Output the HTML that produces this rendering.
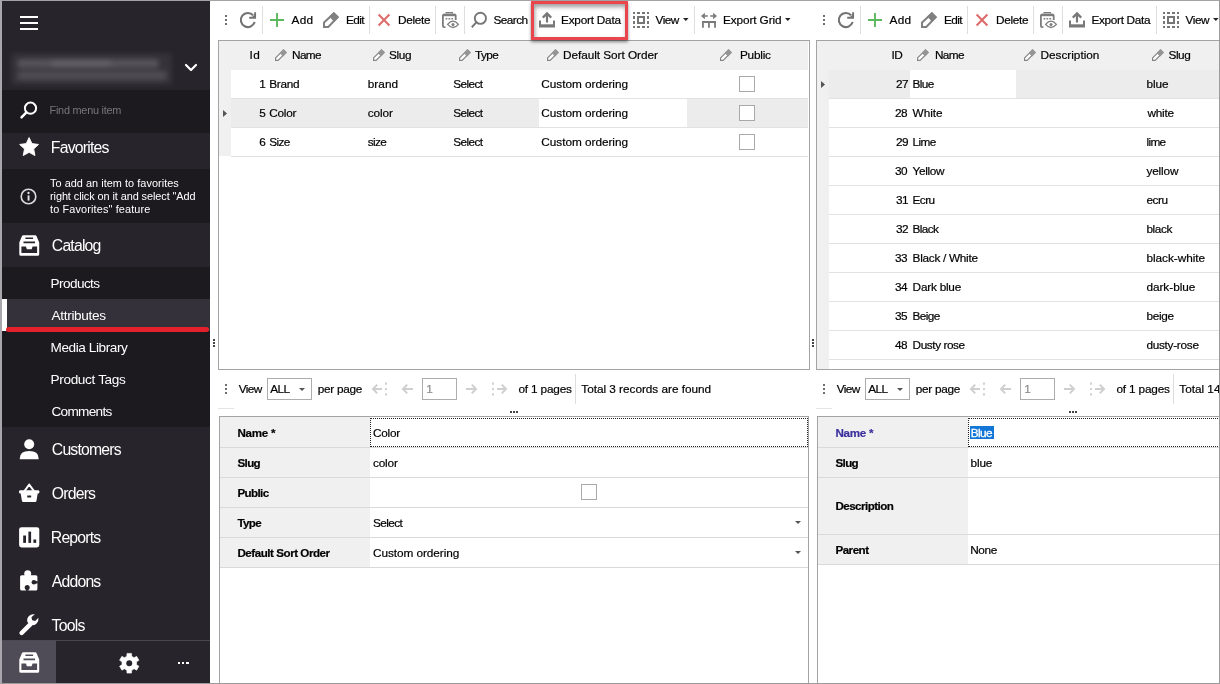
<!DOCTYPE html><html><head><meta charset="utf-8"><title>Attributes</title><style>
*{box-sizing:border-box;margin:0;padding:0}
html,body{width:1220px;height:684px;overflow:hidden;background:#fff}
body{position:relative;font-family:"Liberation Sans",sans-serif;font-size:11.8px;color:#000}
.abs{position:absolute}
.t{position:absolute;white-space:nowrap;-webkit-text-stroke:0.2px}
#tx{position:absolute;left:0;top:0;width:1220px;height:684px;will-change:transform;z-index:4}
svg{position:absolute;overflow:visible}
#frame{position:absolute;left:0;top:0;width:1220px;height:684px;border-top:1px solid #a3a3a5;border-left:2px solid #a9a6ad;border-right:1px solid #9b9b9b;border-bottom:1px solid #9b9b9b;z-index:50}
</style></head><body>
<div class="abs" style="left:0px;top:0px;width:210px;height:684px;background:#27242b;"></div>
<div class="abs" style="left:20px;top:16px;width:18px;height:2px;background:#fff;"></div>
<div class="abs" style="left:20px;top:22px;width:18px;height:2px;background:#fff;"></div>
<div class="abs" style="left:20px;top:28px;width:18px;height:2px;background:#fff;"></div>
<div class="abs" style="left:11px;top:53px;width:161px;height:32px;filter:blur(2.6px)">
<div class="abs" style="left:0px;top:0px;width:161px;height:32px;background:#35323a;border-radius:3px"></div>
<div class="abs" style="left:6px;top:6px;width:142px;height:9px;background:#55525a;border-radius:4px"></div>
<div class="abs" style="left:6px;top:18px;width:150px;height:9px;background:#4e4b53;border-radius:4px"></div>
<div class="abs" style="left:40px;top:7px;width:60px;height:7px;background:#615e66;border-radius:3px"></div>
</div>
<svg style="left:184px;top:63px" width="14" height="10" viewBox="0 0 14 10"><path d="M2 2 L7 7 L12 2" fill="none" stroke="#fff" stroke-width="2.2" stroke-linecap="round" stroke-linejoin="round"/></svg>
<div class="abs" style="left:2px;top:90px;width:208px;height:43px;background:#1c1a1f;"></div>
<svg style="left:20px;top:101px" width="18" height="18" viewBox="0 0 18 18"><circle cx="10.5" cy="7.2" r="5.6" fill="none" stroke="#fff" stroke-width="2"/><path d="M6.4 11.3 L1.5 16.4" stroke="#fff" stroke-width="2.4" stroke-linecap="round"/></svg>

<svg style="left:18.8px;top:137.4px" width="20.2" height="19.3" viewBox="0 0 22 21"><path d="M11 0.6 L14.1 7.2 L21.3 8.1 L16 13 L17.4 20.2 L11 16.7 L4.6 20.2 L6 13 L0.7 8.1 L7.9 7.2 Z" fill="#fff" stroke="#fff" stroke-width="1" stroke-linejoin="round"/></svg>

<div class="abs" style="left:2px;top:169px;width:208px;height:53.5px;background:#1c1a1f;"></div>
<svg style="left:19.5px;top:188px" width="17" height="17" viewBox="0 0 17 17"><circle cx="8.5" cy="8.5" r="7.3" fill="none" stroke="#dcdcdc" stroke-width="1.6"/><rect x="7.6" y="7.4" width="1.9" height="5.2" fill="#e4e4e4"/><circle cx="8.5" cy="5" r="1.15" fill="#e4e4e4"/></svg>



<svg style="left:18.8px;top:234.6px" width="20.5" height="21" viewBox="0 0 20.5 21"><path d="M4.4 0.3 H16.1 Q17.2 0.3 17.6 1.3 L20.2 7.6 V19.2 Q20.2 20.7 18.7 20.7 H1.8 Q0.3 20.7 0.3 19.2 V7.6 L2.9 1.3 Q3.3 0.3 4.4 0.3 Z" fill="#fff"/><path d="M6.4 3.2 H14.1 M4.5 7.4 H16" stroke="#27242b" stroke-width="1.6" fill="none"/><path d="M2.4 11.6 H6.9 L7.9 14.3 H12.6 L13.6 11.6 H18.1 V17.9 H2.4 Z" fill="#27242b"/></svg>

<div class="abs" style="left:2px;top:267px;width:208px;height:160px;background:#1c1a1f;"></div>
<div class="abs" style="left:2px;top:299px;width:208px;height:32px;background:#34313b;"></div>
<div class="abs" style="left:2px;top:299px;width:5px;height:32px;background:#fff;"></div>





<div class="abs" style="left:5.5px;top:327.2px;width:203.5px;height:5px;background:#e3202b;border-radius:3px"></div>
<svg style="left:18.8px;top:439px" width="20.5" height="21" viewBox="0 0 20.5 21"><circle cx="10.2" cy="5.2" r="5" fill="#fff"/><path d="M0.8 20.2 V19.4 Q0.8 12 10.2 12 Q19.6 12 19.6 19.4 V20.2 Z" fill="#fff"/></svg>

<svg style="left:18.8px;top:482.5px" width="20.5" height="21" viewBox="0 0 20.5 21"><path d="M10.2 1.6 L5.2 8.4 M10.2 1.6 L15.2 8.4" fill="none" stroke="#fff" stroke-width="1.9" stroke-linecap="round"/><path d="M1.4 7.2 H19 Q20.4 7.2 20.4 8.6 V9.2 Q20.4 10.6 19 10.6 H18.7 L17.5 17.7 Q17.3 18.9 16.1 18.9 H4.3 Q3.1 18.9 2.9 17.7 L1.7 10.6 H1.4 Q0 10.6 0 9.2 V8.6 Q0 7.2 1.4 7.2 Z" fill="#fff"/><rect x="8.2" y="12.4" width="4" height="2" rx=".3" fill="#27242b"/></svg>

<svg style="left:18.8px;top:526.6px" width="20.5" height="21" viewBox="0 0 20.5 21"><rect x="0.1" y="0.2" width="20.2" height="20.2" rx="2.4" fill="#fff"/><rect x="4.2" y="8.5" width="2.8" height="7.4" fill="#27242b"/><rect x="9.4" y="4.6" width="2.7" height="11.3" fill="#27242b"/><rect x="14.4" y="12.5" width="2.8" height="3.4" fill="#27242b"/></svg>

<svg style="left:18.8px;top:570px" width="20.5" height="21" viewBox="0 0 20.5 21"><rect x="1.1" y="5.2" width="17.3" height="15.4" rx="1.6" fill="#fff"/><circle cx="8.7" cy="3.8" r="3.5" fill="#fff"/><rect x="6" y="3.8" width="5.4" height="3" fill="#fff"/><circle cx="14.9" cy="12.3" r="2.3" fill="#27242b"/><rect x="15.5" y="11.1" width="3.2" height="2.4" fill="#27242b"/><circle cx="8.2" cy="17.4" r="2.5" fill="#27242b"/><rect x="7" y="18" width="2.4" height="2.9" fill="#27242b"/></svg>

<svg style="left:18.3px;top:614.4px" width="21.7" height="22.2" viewBox="0 0 20.5 21"><path d="M3.4 18 L11.6 9.8" stroke="#fff" stroke-width="4.2" stroke-linecap="round" fill="none"/><path d="M15.9 0.3 Q12.6 -0.4 10.4 1.8 Q8 4.2 8.9 7.6 L11.8 10.5 Q15.2 11.4 17.6 9 Q19.8 6.8 19.3 3.6 L16.3 6.6 L13.4 5.9 L12.7 3 Z" fill="#fff"/></svg>

<div class="abs" style="left:2px;top:640px;width:208px;height:1px;background:#4b4851;"></div>
<div class="abs" style="left:2px;top:641px;width:54px;height:42px;background:#4f4c58;"></div>
<svg style="left:18.8px;top:652.2px" width="20.5" height="21" viewBox="0 0 20.5 21"><path d="M4.4 0.3 H16.1 Q17.2 0.3 17.6 1.3 L20.2 7.6 V19.2 Q20.2 20.7 18.7 20.7 H1.8 Q0.3 20.7 0.3 19.2 V7.6 L2.9 1.3 Q3.3 0.3 4.4 0.3 Z" fill="#fff"/><path d="M6.4 3.2 H14.1 M4.5 7.4 H16" stroke="#4f4c58" stroke-width="1.6" fill="none"/><path d="M2.4 11.6 H6.9 L7.9 14.3 H12.6 L13.6 11.6 H18.1 V17.9 H2.4 Z" fill="#4f4c58"/></svg>
<svg style="left:118.7px;top:652.7px" width="20.5" height="20.5" viewBox="0 0 20.5 20.5"><path d="M12.66 3.25 L12.52 0.41 L7.98 0.41 L7.84 3.25 L5.40 4.67 L2.86 3.36 L0.59 7.30 L2.99 8.84 L2.99 11.66 L0.59 13.20 L2.86 17.14 L5.40 15.83 L7.84 17.25 L7.98 20.09 L12.52 20.09 L12.66 17.25 L15.10 15.83 L17.64 17.14 L19.91 13.20 L17.51 11.66 L17.51 8.84 L19.91 7.30 L17.64 3.36 L15.10 4.67 Z" fill="#fff" stroke="#fff" stroke-width=".6" stroke-linejoin="round"/><circle cx="10.25" cy="10.25" r="3" fill="#27242b"/></svg>
<div class="abs" style="left:177.7px;top:661.8px;width:2.4px;height:2.4px;background:#fff;"></div>
<div class="abs" style="left:181.95px;top:661.8px;width:2.4px;height:2.4px;background:#fff;"></div>
<div class="abs" style="left:186.2px;top:661.8px;width:2.4px;height:2.4px;background:#fff;"></div>
<div class="abs" style="left:225px;top:15px;width:2px;height:2px;background:#6e6e6e;"></div><div class="abs" style="left:225px;top:19px;width:2px;height:2px;background:#6e6e6e;"></div><div class="abs" style="left:225px;top:23px;width:2px;height:2px;background:#6e6e6e;"></div>
<svg style="left:240px;top:12px" width="16" height="16" viewBox="0 0 16 16"><path d="M13.14 3.28 A7.05 7.05 0 1 0 14.64 10.06" fill="none" stroke="#737373" stroke-width="2.1"/><path d="M9.2 5.75 H15.1 V0.2" fill="none" stroke="#737373" stroke-width="1.9"/><path d="M11.4 5.7 L15.4 1.7 V5.7 Z" fill="#737373"/></svg>
<div class="abs" style="left:262px;top:6px;width:1px;height:28px;background:#dedede;"></div>
<svg style="left:270px;top:13px" width="14" height="14" viewBox="0 0 14 14"><path d="M7 0 V14 M0 7 H14" stroke="#5cb85c" stroke-width="1.9" fill="none"/></svg>

<svg style="left:323px;top:12px" width="16" height="16" viewBox="0 0 16 16"><path d="M1 10.6 L10.8 1.4 L14.6 5.2 L5.3 15 H1 Z" fill="none" stroke="#808080" stroke-width="2"/><path d="M6.2 4.6 L10.9 0 L16 5.1 L11.2 9.9 Z" fill="#808080"/></svg>

<div class="abs" style="left:369px;top:6px;width:1px;height:28px;background:#dedede;"></div>
<svg style="left:378px;top:14px" width="12" height="12" viewBox="0 0 12 12"><path d="M0.6 0.6 L11.4 11.4 M11.4 0.6 L0.6 11.4" stroke="#dd6c6c" stroke-width="2.1" fill="none"/></svg>

<div class="abs" style="left:435px;top:6px;width:1px;height:28px;background:#dedede;"></div>
<svg style="left:442px;top:12px" width="17" height="16" viewBox="0 0 17 16"><path d="M3.4 15.1 H2.2 Q0.9 15.1 0.9 13.8 V3.6 Q0.9 2.6 2.2 2.6 H12.4 Q13.7 2.6 13.7 3.6 V8" fill="none" stroke="#7c7c7c" stroke-width="1.8"/><path d="M0.9 3 H13.7" stroke="#7c7c7c" stroke-width="2.4"/><path d="M4.2 1.6 V0.7 H10.4 V1.6" fill="none" stroke="#7c7c7c" stroke-width="1.3"/><path d="M3.6 6.8 h1.7 M6.5 6.8 h1.7 M9.4 6.8 h1.7" stroke="#7c7c7c" stroke-width="1.5"/><path d="M5.6 12.4 Q11 6 16.4 12.4 Q11 18.6 5.6 12.4 Z" fill="#fff" stroke="#7c7c7c" stroke-width="1.3"/><circle cx="11" cy="12.4" r="1.5" fill="#7c7c7c"/></svg>
<div class="abs" style="left:464px;top:6px;width:1px;height:28px;background:#dedede;"></div>
<svg style="left:471px;top:12px" width="16" height="16" viewBox="0 0 16 16"><circle cx="9.4" cy="6.3" r="5.6" fill="none" stroke="#777" stroke-width="1.9"/><path d="M5.3 10.4 L0.8 15.2" stroke="#777" stroke-width="2"/></svg>

<svg style="left:539px;top:12px" width="16" height="16" viewBox="0 0 16 16"><path d="M1 8.6 V14 M15 8.6 V14" fill="none" stroke="#787878" stroke-width="2" /><path d="M0 13.9 H16" stroke="#787878" stroke-width="3.2"/><path d="M8 10.6 V1.6 M3.8 5.6 L8 1.4 L12.2 5.6" fill="none" stroke="#787878" stroke-width="2.2"/></svg>

<svg style="left:633px;top:12px" width="16" height="16" viewBox="0 0 16 16"><rect x="0" y="0" width="2" height="2" fill="#767676"/><rect x="14" y="0" width="2" height="2" fill="#767676"/><rect x="0" y="14" width="2" height="2" fill="#767676"/><rect x="14" y="14" width="2" height="2" fill="#767676"/><rect x="4" y="0" width="3" height="2" fill="#767676"/><rect x="0" y="4" width="2" height="3" fill="#767676"/><rect x="4" y="14" width="3" height="2" fill="#767676"/><rect x="14" y="4" width="2" height="3" fill="#767676"/><rect x="9" y="0" width="3" height="2" fill="#767676"/><rect x="0" y="9" width="2" height="3" fill="#767676"/><rect x="9" y="14" width="3" height="2" fill="#767676"/><rect x="14" y="9" width="2" height="3" fill="#767676"/><rect x="5" y="5" width="6" height="6" fill="none" stroke="#767676" stroke-width="2"/></svg>

<svg style="left:683px;top:18px" width="5.6" height="3.1" viewBox="0 0 5.6 3.1"><path d="M0 0 H5.6 L2.8 3.1 Z" fill="#222"/></svg>
<div class="abs" style="left:694px;top:6px;width:1px;height:28px;background:#dedede;"></div>
<svg style="left:701px;top:13px" width="16" height="15" viewBox="0 0 16 15"><path d="M1 9 H15 M1.95 8.2 V14.8 M7.95 8.2 V14.8 M14 8.2 V14.8" fill="none" stroke="#7a7a7a" stroke-width="1.8"/><path d="M3.6 3 H6.8 M9.2 3 H12.4" stroke="#7a7a7a" stroke-width="1.6"/><path d="M0 3 L3.9 -0.2 V6.2 Z M16 3 L12.1 -0.2 V6.2 Z" fill="#7a7a7a"/></svg>

<svg style="left:785px;top:18px" width="5.6" height="3.1" viewBox="0 0 5.6 3.1"><path d="M0 0 H5.6 L2.8 3.1 Z" fill="#222"/></svg>
<div class="abs" style="left:531px;top:1px;width:97px;height:39px;border:3px solid #e8464c;box-shadow:0 2px 3px rgba(0,0,0,.45),inset 1px 3px 4px rgba(0,0,0,.38);z-index:5"></div>
<div class="abs" style="left:823px;top:15px;width:2px;height:2px;background:#6e6e6e;"></div><div class="abs" style="left:823px;top:19px;width:2px;height:2px;background:#6e6e6e;"></div><div class="abs" style="left:823px;top:23px;width:2px;height:2px;background:#6e6e6e;"></div>
<svg style="left:838px;top:12px" width="16" height="16" viewBox="0 0 16 16"><path d="M13.14 3.28 A7.05 7.05 0 1 0 14.64 10.06" fill="none" stroke="#737373" stroke-width="2.1"/><path d="M9.2 5.75 H15.1 V0.2" fill="none" stroke="#737373" stroke-width="1.9"/><path d="M11.4 5.7 L15.4 1.7 V5.7 Z" fill="#737373"/></svg>
<div class="abs" style="left:860px;top:6px;width:1px;height:28px;background:#dedede;"></div>
<svg style="left:868px;top:13px" width="14" height="14" viewBox="0 0 14 14"><path d="M7 0 V14 M0 7 H14" stroke="#5cb85c" stroke-width="1.9" fill="none"/></svg>

<svg style="left:921px;top:12px" width="16" height="16" viewBox="0 0 16 16"><path d="M1 10.6 L10.8 1.4 L14.6 5.2 L5.3 15 H1 Z" fill="none" stroke="#808080" stroke-width="2"/><path d="M6.2 4.6 L10.9 0 L16 5.1 L11.2 9.9 Z" fill="#808080"/></svg>

<div class="abs" style="left:967px;top:6px;width:1px;height:28px;background:#dedede;"></div>
<svg style="left:976px;top:14px" width="12" height="12" viewBox="0 0 12 12"><path d="M0.6 0.6 L11.4 11.4 M11.4 0.6 L0.6 11.4" stroke="#dd6c6c" stroke-width="2.1" fill="none"/></svg>

<div class="abs" style="left:1033px;top:6px;width:1px;height:28px;background:#dedede;"></div>
<svg style="left:1040px;top:12px" width="17" height="16" viewBox="0 0 17 16"><path d="M3.4 15.1 H2.2 Q0.9 15.1 0.9 13.8 V3.6 Q0.9 2.6 2.2 2.6 H12.4 Q13.7 2.6 13.7 3.6 V8" fill="none" stroke="#7c7c7c" stroke-width="1.8"/><path d="M0.9 3 H13.7" stroke="#7c7c7c" stroke-width="2.4"/><path d="M4.2 1.6 V0.7 H10.4 V1.6" fill="none" stroke="#7c7c7c" stroke-width="1.3"/><path d="M3.6 6.8 h1.7 M6.5 6.8 h1.7 M9.4 6.8 h1.7" stroke="#7c7c7c" stroke-width="1.5"/><path d="M5.6 12.4 Q11 6 16.4 12.4 Q11 18.6 5.6 12.4 Z" fill="#fff" stroke="#7c7c7c" stroke-width="1.3"/><circle cx="11" cy="12.4" r="1.5" fill="#7c7c7c"/></svg>
<div class="abs" style="left:1062px;top:6px;width:1px;height:28px;background:#dedede;"></div>
<svg style="left:1069px;top:12px" width="16" height="16" viewBox="0 0 16 16"><path d="M1 8.6 V14 M15 8.6 V14" fill="none" stroke="#787878" stroke-width="2" /><path d="M0 13.9 H16" stroke="#787878" stroke-width="3.2"/><path d="M8 10.6 V1.6 M3.8 5.6 L8 1.4 L12.2 5.6" fill="none" stroke="#787878" stroke-width="2.2"/></svg>

<div class="abs" style="left:1156px;top:6px;width:1px;height:28px;background:#dedede;"></div>
<svg style="left:1163px;top:12px" width="16" height="16" viewBox="0 0 16 16"><rect x="0" y="0" width="2" height="2" fill="#767676"/><rect x="14" y="0" width="2" height="2" fill="#767676"/><rect x="0" y="14" width="2" height="2" fill="#767676"/><rect x="14" y="14" width="2" height="2" fill="#767676"/><rect x="4" y="0" width="3" height="2" fill="#767676"/><rect x="0" y="4" width="2" height="3" fill="#767676"/><rect x="4" y="14" width="3" height="2" fill="#767676"/><rect x="14" y="4" width="2" height="3" fill="#767676"/><rect x="9" y="0" width="3" height="2" fill="#767676"/><rect x="0" y="9" width="2" height="3" fill="#767676"/><rect x="9" y="14" width="3" height="2" fill="#767676"/><rect x="14" y="9" width="2" height="3" fill="#767676"/><rect x="5" y="5" width="6" height="6" fill="none" stroke="#767676" stroke-width="2"/></svg>

<svg style="left:1213px;top:18px" width="5.6" height="3.1" viewBox="0 0 5.6 3.1"><path d="M0 0 H5.6 L2.8 3.1 Z" fill="#222"/></svg>
<div class="abs" style="left:218px;top:40px;width:592px;height:330px;background:#fff;border:1px solid #a3a3a3"></div>
<div class="abs" style="left:219px;top:41px;width:589px;height:29px;background:#f0f0f0;"></div>
<div class="abs" style="left:219px;top:69px;width:12px;height:87px;background:#f0f0f0;"></div>
<div class="abs" style="left:231px;top:98px;width:577px;height:29px;background:#ececec;"></div>
<div class="abs" style="left:539px;top:99px;width:148px;height:28px;background:#fff;"></div>
<div class="abs" style="left:231px;top:98px;width:577px;height:1px;background:#e2e2e2;"></div>
<div class="abs" style="left:231px;top:127px;width:577px;height:1px;background:#e2e2e2;"></div>
<div class="abs" style="left:231px;top:156px;width:577px;height:1px;background:#e2e2e2;"></div>
<svg style="left:223px;top:110px" width="4" height="7" viewBox="0 0 4 7"><path d="M0 0 L4 3.5 L0 7 Z" fill="#555"/></svg>

<svg style="left:275px;top:49px" width="12" height="12" viewBox="0 0 12 12"><path d="M0.6 8.9 L8.5 1 L11 3.5 L3.1 11.4 H0.6 Z" fill="#fff" stroke="#858585" stroke-width="1.2"/><path d="M4.6 3.9 L8.5 0 L12 3.5 L8.1 7.4 Z" fill="#959595"/></svg>

<svg style="left:372.5px;top:49px" width="12" height="12" viewBox="0 0 12 12"><path d="M0.6 8.9 L8.5 1 L11 3.5 L3.1 11.4 H0.6 Z" fill="#fff" stroke="#858585" stroke-width="1.2"/><path d="M4.6 3.9 L8.5 0 L12 3.5 L8.1 7.4 Z" fill="#959595"/></svg>

<svg style="left:459px;top:49px" width="12" height="12" viewBox="0 0 12 12"><path d="M0.6 8.9 L8.5 1 L11 3.5 L3.1 11.4 H0.6 Z" fill="#fff" stroke="#858585" stroke-width="1.2"/><path d="M4.6 3.9 L8.5 0 L12 3.5 L8.1 7.4 Z" fill="#959595"/></svg>

<svg style="left:547px;top:49px" width="12" height="12" viewBox="0 0 12 12"><path d="M0.6 8.9 L8.5 1 L11 3.5 L3.1 11.4 H0.6 Z" fill="#fff" stroke="#858585" stroke-width="1.2"/><path d="M4.6 3.9 L8.5 0 L12 3.5 L8.1 7.4 Z" fill="#959595"/></svg>

<svg style="left:720px;top:49px" width="12" height="12" viewBox="0 0 12 12"><path d="M0.6 8.9 L8.5 1 L11 3.5 L3.1 11.4 H0.6 Z" fill="#fff" stroke="#858585" stroke-width="1.2"/><path d="M4.6 3.9 L8.5 0 L12 3.5 L8.1 7.4 Z" fill="#959595"/></svg>






<div class="abs" style="left:739px;top:76px;width:16px;height:16px;background:#fff;border:1px solid #a9a9a9"></div>





<div class="abs" style="left:739px;top:105px;width:16px;height:16px;background:#fff;border:1px solid #a9a9a9"></div>





<div class="abs" style="left:739px;top:134px;width:16px;height:16px;background:#fff;border:1px solid #a9a9a9"></div>
<div class="abs" style="left:225px;top:384px;width:2px;height:2px;background:#6e6e6e;"></div><div class="abs" style="left:225px;top:388px;width:2px;height:2px;background:#6e6e6e;"></div><div class="abs" style="left:225px;top:392px;width:2px;height:2px;background:#6e6e6e;"></div>

<div class="abs" style="left:267px;top:378px;width:45px;height:22px;background:#fff;border:1px solid #adadad"></div>

<svg style="left:299px;top:388px" width="6" height="3" viewBox="0 0 6 3"><path d="M0 0 H6 L3 3 Z" fill="#555"/></svg>

<svg style="left:372.3px;top:382px" width="16" height="14" viewBox="0 0 16 14"><path d="M1 7 H10 M5.2 2.6 L1 7 L5.2 11.4" fill="none" stroke="#cfcfcf" stroke-width="2"/><path d="M14 0.6 v2.2 M14 5.9 v2.2 M14 11.2 v2.2" stroke="#cfcfcf" stroke-width="1.9"/></svg>
<svg style="left:402px;top:384px" width="12" height="10" viewBox="0 0 12 10"><path d="M1 5 H11 M5.2 0.6 L1 5 L5.2 9.4" fill="none" stroke="#cfcfcf" stroke-width="2"/></svg>
<div class="abs" style="left:422px;top:378px;width:35px;height:22px;background:#fff;border:1px solid #adadad"></div>

<svg style="left:465px;top:384px" width="12" height="10" viewBox="0 0 12 10"><path d="M11 5 H1 M6.8 0.6 L11 5 L6.8 9.4" fill="none" stroke="#cfcfcf" stroke-width="2"/></svg>
<svg style="left:490.8px;top:382px" width="16" height="14" viewBox="0 0 16 14"><path d="M15 7 H6 M10.8 2.6 L15 7 L10.8 11.4" fill="none" stroke="#cfcfcf" stroke-width="2"/><path d="M2 0.6 v2.2 M2 5.9 v2.2 M2 11.2 v2.2" stroke="#cfcfcf" stroke-width="1.9"/></svg>

<div class="abs" style="left:575px;top:374px;width:1px;height:30px;background:#dedede;"></div>

<div class="abs" style="left:823px;top:384px;width:2px;height:2px;background:#6e6e6e;"></div><div class="abs" style="left:823px;top:388px;width:2px;height:2px;background:#6e6e6e;"></div><div class="abs" style="left:823px;top:392px;width:2px;height:2px;background:#6e6e6e;"></div>

<div class="abs" style="left:865px;top:378px;width:45px;height:22px;background:#fff;border:1px solid #adadad"></div>

<svg style="left:897px;top:388px" width="6" height="3" viewBox="0 0 6 3"><path d="M0 0 H6 L3 3 Z" fill="#555"/></svg>

<svg style="left:970.3px;top:382px" width="16" height="14" viewBox="0 0 16 14"><path d="M1 7 H10 M5.2 2.6 L1 7 L5.2 11.4" fill="none" stroke="#cfcfcf" stroke-width="2"/><path d="M14 0.6 v2.2 M14 5.9 v2.2 M14 11.2 v2.2" stroke="#cfcfcf" stroke-width="1.9"/></svg>
<svg style="left:1000px;top:384px" width="12" height="10" viewBox="0 0 12 10"><path d="M1 5 H11 M5.2 0.6 L1 5 L5.2 9.4" fill="none" stroke="#cfcfcf" stroke-width="2"/></svg>
<div class="abs" style="left:1020px;top:378px;width:35px;height:22px;background:#fff;border:1px solid #adadad"></div>

<svg style="left:1063px;top:384px" width="12" height="10" viewBox="0 0 12 10"><path d="M11 5 H1 M6.8 0.6 L11 5 L6.8 9.4" fill="none" stroke="#cfcfcf" stroke-width="2"/></svg>
<svg style="left:1088.8px;top:382px" width="16" height="14" viewBox="0 0 16 14"><path d="M15 7 H6 M10.8 2.6 L15 7 L10.8 11.4" fill="none" stroke="#cfcfcf" stroke-width="2"/><path d="M2 0.6 v2.2 M2 5.9 v2.2 M2 11.2 v2.2" stroke="#cfcfcf" stroke-width="1.9"/></svg>

<div class="abs" style="left:1173px;top:374px;width:1px;height:30px;background:#dedede;"></div>

<div class="abs" style="left:218px;top:408px;width:16px;height:1px;background:#e4e4e4;"></div>
<div class="abs" style="left:816px;top:408px;width:16px;height:1px;background:#e4e4e4;"></div>
<div class="abs" style="left:510px;top:411px;width:2px;height:2px;background:#444;"></div>
<div class="abs" style="left:513px;top:411px;width:2px;height:2px;background:#444;"></div>
<div class="abs" style="left:516px;top:411px;width:2px;height:2px;background:#444;"></div>
<div class="abs" style="left:1069px;top:411px;width:2px;height:2px;background:#444;"></div>
<div class="abs" style="left:1072px;top:411px;width:2px;height:2px;background:#444;"></div>
<div class="abs" style="left:1075px;top:411px;width:2px;height:2px;background:#444;"></div>
<div class="abs" style="left:213px;top:339px;width:2px;height:2px;background:#444;"></div>
<div class="abs" style="left:812px;top:339px;width:2px;height:2px;background:#444;"></div>
<div class="abs" style="left:213px;top:342px;width:2px;height:2px;background:#444;"></div>
<div class="abs" style="left:812px;top:342px;width:2px;height:2px;background:#444;"></div>
<div class="abs" style="left:213px;top:345px;width:2px;height:2px;background:#444;"></div>
<div class="abs" style="left:812px;top:345px;width:2px;height:2px;background:#444;"></div>
<div class="abs" style="left:219px;top:416px;width:590px;height:280px;background:#fff;border:1px solid #a3a3a3"></div>
<div class="abs" style="left:220px;top:417px;width:150px;height:150px;background:#f0f0f0;"></div>
<div class="abs" style="left:220px;top:447px;width:588px;height:1px;background:#dadada;"></div>
<div class="abs" style="left:220px;top:477px;width:588px;height:1px;background:#dadada;"></div>
<div class="abs" style="left:220px;top:507px;width:588px;height:1px;background:#dadada;"></div>
<div class="abs" style="left:220px;top:537px;width:588px;height:1px;background:#dadada;"></div>
<div class="abs" style="left:220px;top:567px;width:588px;height:1px;background:#dadada;"></div>





<div class="abs" style="left:370px;top:418px;width:438px;height:29px;border:1px dotted #222"></div>




<div class="abs" style="left:581px;top:484px;width:16px;height:16px;background:#fff;border:1px solid #a9a9a9"></div>
<svg style="left:794.5px;top:521px" width="6" height="3" viewBox="0 0 6 3"><path d="M0 0 H6 L3 3 Z" fill="#555"/></svg>
<svg style="left:794.5px;top:551px" width="6" height="3" viewBox="0 0 6 3"><path d="M0 0 H6 L3 3 Z" fill="#555"/></svg>
<div class="abs" style="left:816px;top:40px;width:420px;height:330px;background:#fff;border:1px solid #a3a3a3"></div>
<div class="abs" style="left:817px;top:41px;width:420px;height:29px;background:#f0f0f0;"></div>
<div class="abs" style="left:817px;top:69px;width:12px;height:300px;background:#f0f0f0;"></div>
<div class="abs" style="left:829px;top:70px;width:400px;height:28px;background:#ececec;"></div>
<div class="abs" style="left:910px;top:70px;width:106px;height:28px;background:#fff;"></div>
<div class="abs" style="left:829px;top:98px;width:400px;height:1px;background:#e2e2e2;"></div>
<div class="abs" style="left:829px;top:127px;width:400px;height:1px;background:#e2e2e2;"></div>
<div class="abs" style="left:829px;top:156px;width:400px;height:1px;background:#e2e2e2;"></div>
<div class="abs" style="left:829px;top:185px;width:400px;height:1px;background:#e2e2e2;"></div>
<div class="abs" style="left:829px;top:214px;width:400px;height:1px;background:#e2e2e2;"></div>
<div class="abs" style="left:829px;top:243px;width:400px;height:1px;background:#e2e2e2;"></div>
<div class="abs" style="left:829px;top:272px;width:400px;height:1px;background:#e2e2e2;"></div>
<div class="abs" style="left:829px;top:301px;width:400px;height:1px;background:#e2e2e2;"></div>
<div class="abs" style="left:829px;top:330px;width:400px;height:1px;background:#e2e2e2;"></div>
<div class="abs" style="left:829px;top:359px;width:400px;height:1px;background:#e2e2e2;"></div>
<svg style="left:821px;top:81px" width="4" height="7" viewBox="0 0 4 7"><path d="M0 0 L4 3.5 L0 7 Z" fill="#555"/></svg>

<svg style="left:917px;top:49px" width="12" height="12" viewBox="0 0 12 12"><path d="M0.6 8.9 L8.5 1 L11 3.5 L3.1 11.4 H0.6 Z" fill="#fff" stroke="#858585" stroke-width="1.2"/><path d="M4.6 3.9 L8.5 0 L12 3.5 L8.1 7.4 Z" fill="#959595"/></svg>

<svg style="left:1024px;top:49px" width="12" height="12" viewBox="0 0 12 12"><path d="M0.6 8.9 L8.5 1 L11 3.5 L3.1 11.4 H0.6 Z" fill="#fff" stroke="#858585" stroke-width="1.2"/><path d="M4.6 3.9 L8.5 0 L12 3.5 L8.1 7.4 Z" fill="#959595"/></svg>

<svg style="left:1152px;top:49px" width="12" height="12" viewBox="0 0 12 12"><path d="M0.6 8.9 L8.5 1 L11 3.5 L3.1 11.4 H0.6 Z" fill="#fff" stroke="#858585" stroke-width="1.2"/><path d="M4.6 3.9 L8.5 0 L12 3.5 L8.1 7.4 Z" fill="#959595"/></svg>































<div class="abs" style="left:817px;top:416px;width:420px;height:280px;background:#fff;border:1px solid #a3a3a3"></div>
<div class="abs" style="left:818px;top:417px;width:150px;height:147px;background:#f0f0f0;"></div>
<div class="abs" style="left:818px;top:447px;width:420px;height:1px;background:#dadada;"></div>
<div class="abs" style="left:818px;top:477px;width:420px;height:1px;background:#dadada;"></div>
<div class="abs" style="left:818px;top:534px;width:420px;height:1px;background:#dadada;"></div>
<div class="abs" style="left:818px;top:564px;width:420px;height:1px;background:#dadada;"></div>




<div class="abs" style="left:968px;top:418px;width:420px;height:29px;border:1px dotted #222"></div>
<div class="abs" style="left:970px;top:426px;width:24px;height:13px;background:#1176d6;"></div>



<div id="tx">
<div class="t" style="left:49.50px;top:101.82px;font-size:10.9px;line-height:16px;height:16px;color:#77757b;letter-spacing:-0.245px;-webkit-text-stroke:0;">Find menu item</div>
<div class="t" style="left:50.80px;top:137.53px;font-size:15.8px;line-height:20px;height:20px;color:#fff;letter-spacing:-0.795px;-webkit-text-stroke:0;">Favorites</div>
<div class="t" style="left:50.00px;top:175.22px;font-size:10.9px;line-height:16px;height:16px;color:#fff;letter-spacing:0.039px;-webkit-text-stroke:0;">To add an item to favorites</div>
<div class="t" style="left:50.00px;top:188.22px;font-size:10.9px;line-height:16px;height:16px;color:#fff;letter-spacing:-0.074px;-webkit-text-stroke:0;">right click on it and select &quot;Add</div>
<div class="t" style="left:50.00px;top:201.22px;font-size:10.9px;line-height:16px;height:16px;color:#fff;letter-spacing:0.133px;-webkit-text-stroke:0;">to Favorites&quot; feature</div>
<div class="t" style="left:51.80px;top:235.53px;font-size:15.8px;line-height:20px;height:20px;color:#fff;letter-spacing:-0.822px;-webkit-text-stroke:0;">Catalog</div>
<div class="t" style="left:50.50px;top:273.99px;font-size:13.6px;line-height:20px;height:20px;color:#fff;letter-spacing:-0.578px;-webkit-text-stroke:0;">Products</div>
<div class="t" style="left:51.50px;top:305.99px;font-size:13.6px;line-height:20px;height:20px;color:#fff;letter-spacing:-0.314px;-webkit-text-stroke:0;">Attributes</div>
<div class="t" style="left:50.50px;top:337.99px;font-size:13.6px;line-height:20px;height:20px;color:#fff;letter-spacing:-0.421px;-webkit-text-stroke:0;">Media Library</div>
<div class="t" style="left:50.50px;top:369.99px;font-size:13.6px;line-height:20px;height:20px;color:#fff;letter-spacing:-0.340px;-webkit-text-stroke:0;">Product Tags</div>
<div class="t" style="left:51.50px;top:401.99px;font-size:13.6px;line-height:20px;height:20px;color:#fff;letter-spacing:-0.707px;-webkit-text-stroke:0;">Comments</div>
<div class="t" style="left:51.80px;top:439.53px;font-size:15.8px;line-height:20px;height:20px;color:#fff;letter-spacing:-0.822px;-webkit-text-stroke:0;">Customers</div>
<div class="t" style="left:51.80px;top:483.53px;font-size:15.8px;line-height:20px;height:20px;color:#fff;letter-spacing:-0.822px;-webkit-text-stroke:0;">Orders</div>
<div class="t" style="left:50.80px;top:527.53px;font-size:15.8px;line-height:20px;height:20px;color:#fff;letter-spacing:-0.822px;-webkit-text-stroke:0;">Reports</div>
<div class="t" style="left:51.80px;top:571.53px;font-size:15.8px;line-height:20px;height:20px;color:#fff;letter-spacing:-0.822px;-webkit-text-stroke:0;">Addons</div>
<div class="t" style="left:51.60px;top:615.53px;font-size:15.8px;line-height:20px;height:20px;color:#fff;letter-spacing:-0.770px;-webkit-text-stroke:0;">Tools</div>
<div class="t" style="left:291.50px;top:11.91px;font-size:11.8px;line-height:16px;height:16px;letter-spacing:0.285px;">Add</div>
<div class="t" style="left:346.00px;top:11.91px;font-size:11.8px;line-height:16px;height:16px;letter-spacing:-0.614px;">Edit</div>
<div class="t" style="left:398.00px;top:11.91px;font-size:11.8px;line-height:16px;height:16px;letter-spacing:-0.308px;">Delete</div>
<div class="t" style="left:493.50px;top:11.91px;font-size:11.8px;line-height:16px;height:16px;letter-spacing:-0.563px;">Search</div>
<div class="t" style="left:561.00px;top:11.91px;font-size:11.8px;line-height:16px;height:16px;letter-spacing:-0.223px;">Export Data</div>
<div class="t" style="left:655.50px;top:11.91px;font-size:11.8px;line-height:16px;height:16px;letter-spacing:-0.512px;">View</div>
<div class="t" style="left:723.00px;top:11.91px;font-size:11.8px;line-height:16px;height:16px;letter-spacing:-0.110px;">Export Grid</div>
<div class="t" style="left:889.50px;top:11.91px;font-size:11.8px;line-height:16px;height:16px;letter-spacing:0.285px;">Add</div>
<div class="t" style="left:944.00px;top:11.91px;font-size:11.8px;line-height:16px;height:16px;letter-spacing:-0.614px;">Edit</div>
<div class="t" style="left:996.00px;top:11.91px;font-size:11.8px;line-height:16px;height:16px;letter-spacing:-0.308px;">Delete</div>
<div class="t" style="left:1091.50px;top:11.91px;font-size:11.8px;line-height:16px;height:16px;letter-spacing:-0.323px;">Export Data</div>
<div class="t" style="left:1185.60px;top:11.91px;font-size:11.8px;line-height:16px;height:16px;letter-spacing:-0.479px;">View</div>
<div class="t" style="left:249.50px;top:46.91px;font-size:11.8px;line-height:16px;height:16px;letter-spacing:0.500px;">Id</div>
<div class="t" style="left:292.00px;top:46.91px;font-size:11.8px;line-height:16px;height:16px;letter-spacing:-0.614px;">Name</div>
<div class="t" style="left:389.00px;top:46.91px;font-size:11.8px;line-height:16px;height:16px;letter-spacing:-0.350px;">Slug</div>
<div class="t" style="left:475.00px;top:46.91px;font-size:11.8px;line-height:16px;height:16px;letter-spacing:-0.614px;">Type</div>
<div class="t" style="left:563.00px;top:46.91px;font-size:11.8px;line-height:16px;height:16px;letter-spacing:-0.047px;">Default Sort Order</div>
<div class="t" style="left:740.00px;top:46.91px;font-size:11.8px;line-height:16px;height:16px;letter-spacing:-0.246px;">Public</div>
<div class="t" style="left:259.30px;top:75.91px;font-size:11.8px;line-height:16px;height:16px;">1</div>
<div class="t" style="left:269.30px;top:75.91px;font-size:11.8px;line-height:16px;height:16px;letter-spacing:-0.305px;">Brand</div>
<div class="t" style="left:367.70px;top:75.91px;font-size:11.8px;line-height:16px;height:16px;letter-spacing:0.047px;">brand</div>
<div class="t" style="left:453.30px;top:75.91px;font-size:11.8px;line-height:16px;height:16px;letter-spacing:-0.614px;">Select</div>
<div class="t" style="left:541.30px;top:75.91px;font-size:11.8px;line-height:16px;height:16px;letter-spacing:-0.032px;">Custom ordering</div>
<div class="t" style="left:259.30px;top:104.91px;font-size:11.8px;line-height:16px;height:16px;">5</div>
<div class="t" style="left:269.30px;top:104.91px;font-size:11.8px;line-height:16px;height:16px;letter-spacing:-0.265px;">Color</div>
<div class="t" style="left:367.70px;top:104.91px;font-size:11.8px;line-height:16px;height:16px;letter-spacing:-0.085px;">color</div>
<div class="t" style="left:453.30px;top:104.91px;font-size:11.8px;line-height:16px;height:16px;letter-spacing:-0.614px;">Select</div>
<div class="t" style="left:541.30px;top:104.91px;font-size:11.8px;line-height:16px;height:16px;letter-spacing:-0.032px;">Custom ordering</div>
<div class="t" style="left:259.30px;top:133.91px;font-size:11.8px;line-height:16px;height:16px;">6</div>
<div class="t" style="left:269.30px;top:133.91px;font-size:11.8px;line-height:16px;height:16px;letter-spacing:-0.614px;">Size</div>
<div class="t" style="left:367.70px;top:133.91px;font-size:11.8px;line-height:16px;height:16px;letter-spacing:-0.614px;">size</div>
<div class="t" style="left:453.30px;top:133.91px;font-size:11.8px;line-height:16px;height:16px;letter-spacing:-0.614px;">Select</div>
<div class="t" style="left:541.30px;top:133.91px;font-size:11.8px;line-height:16px;height:16px;letter-spacing:-0.032px;">Custom ordering</div>
<div class="t" style="left:238.80px;top:380.91px;font-size:11.8px;line-height:16px;height:16px;letter-spacing:-0.614px;">View</div>
<div class="t" style="left:270.30px;top:380.91px;font-size:11.8px;line-height:16px;height:16px;letter-spacing:-0.614px;">ALL</div>
<div class="t" style="left:317.80px;top:380.91px;font-size:11.8px;line-height:16px;height:16px;letter-spacing:-0.287px;">per page</div>
<div class="t" style="left:426.30px;top:380.91px;font-size:11.8px;line-height:16px;height:16px;color:#8c8c8c;">1</div>
<div class="t" style="left:518.50px;top:380.91px;font-size:11.8px;line-height:16px;height:16px;letter-spacing:-0.189px;">of 1 pages</div>
<div class="t" style="left:581.30px;top:380.91px;font-size:11.8px;line-height:16px;height:16px;letter-spacing:-0.031px;">Total 3 records are found</div>
<div class="t" style="left:836.80px;top:380.91px;font-size:11.8px;line-height:16px;height:16px;letter-spacing:-0.614px;">View</div>
<div class="t" style="left:868.30px;top:380.91px;font-size:11.8px;line-height:16px;height:16px;letter-spacing:-0.614px;">ALL</div>
<div class="t" style="left:915.80px;top:380.91px;font-size:11.8px;line-height:16px;height:16px;letter-spacing:-0.287px;">per page</div>
<div class="t" style="left:1024.30px;top:380.91px;font-size:11.8px;line-height:16px;height:16px;color:#8c8c8c;">1</div>
<div class="t" style="left:1116.50px;top:380.91px;font-size:11.8px;line-height:16px;height:16px;letter-spacing:-0.189px;">of 1 pages</div>
<div class="t" style="left:1179.30px;top:380.91px;font-size:11.8px;line-height:16px;height:16px;letter-spacing:-0.020px;">Total 14 records are found</div>
<div class="t" style="left:237.40px;top:424.98px;font-size:11.6px;line-height:16px;height:16px;font-weight:bold;letter-spacing:-0.240px;">Name *</div>
<div class="t" style="left:237.40px;top:454.98px;font-size:11.6px;line-height:16px;height:16px;font-weight:bold;letter-spacing:-0.603px;">Slug</div>
<div class="t" style="left:237.40px;top:484.98px;font-size:11.6px;line-height:16px;height:16px;font-weight:bold;letter-spacing:-0.603px;">Public</div>
<div class="t" style="left:237.40px;top:514.98px;font-size:11.6px;line-height:16px;height:16px;font-weight:bold;letter-spacing:-0.603px;">Type</div>
<div class="t" style="left:237.40px;top:544.98px;font-size:11.6px;line-height:16px;height:16px;font-weight:bold;letter-spacing:-0.458px;">Default Sort Order</div>
<div class="t" style="left:373.00px;top:424.91px;font-size:11.8px;line-height:16px;height:16px;letter-spacing:-0.265px;">Color</div>
<div class="t" style="left:373.00px;top:454.91px;font-size:11.8px;line-height:16px;height:16px;letter-spacing:-0.185px;">color</div>
<div class="t" style="left:373.00px;top:514.91px;font-size:11.8px;line-height:16px;height:16px;letter-spacing:-0.614px;">Select</div>
<div class="t" style="left:373.00px;top:544.91px;font-size:11.8px;line-height:16px;height:16px;letter-spacing:-0.067px;">Custom ordering</div>
<div class="t" style="left:891.50px;top:46.91px;font-size:11.8px;line-height:16px;height:16px;letter-spacing:-0.478px;">ID</div>
<div class="t" style="left:934.90px;top:46.91px;font-size:11.8px;line-height:16px;height:16px;letter-spacing:-0.614px;">Name</div>
<div class="t" style="left:1040.50px;top:46.91px;font-size:11.8px;line-height:16px;height:16px;letter-spacing:-0.015px;">Description</div>
<div class="t" style="left:1168.50px;top:46.91px;font-size:11.8px;line-height:16px;height:16px;letter-spacing:-0.450px;">Slug</div>
<div class="t" style="left:895.95px;top:75.91px;font-size:11.8px;line-height:16px;height:16px;letter-spacing:-0.614px;">27</div>
<div class="t" style="left:912.60px;top:75.91px;font-size:11.8px;line-height:16px;height:16px;letter-spacing:-0.614px;">Blue</div>
<div class="t" style="left:1146.40px;top:75.91px;font-size:11.8px;line-height:16px;height:16px;letter-spacing:-0.048px;">blue</div>
<div class="t" style="left:894.95px;top:104.91px;font-size:11.8px;line-height:16px;height:16px;letter-spacing:-0.614px;">28</div>
<div class="t" style="left:912.60px;top:104.91px;font-size:11.8px;line-height:16px;height:16px;letter-spacing:-0.048px;">White</div>
<div class="t" style="left:1147.40px;top:104.91px;font-size:11.8px;line-height:16px;height:16px;letter-spacing:-0.195px;">white</div>
<div class="t" style="left:895.95px;top:133.91px;font-size:11.8px;line-height:16px;height:16px;letter-spacing:-0.614px;">29</div>
<div class="t" style="left:912.60px;top:133.91px;font-size:11.8px;line-height:16px;height:16px;letter-spacing:-0.614px;">Lime</div>
<div class="t" style="left:1146.40px;top:133.91px;font-size:11.8px;line-height:16px;height:16px;letter-spacing:-0.614px;">lime</div>
<div class="t" style="left:894.95px;top:162.91px;font-size:11.8px;line-height:16px;height:16px;letter-spacing:-0.614px;">30</div>
<div class="t" style="left:912.60px;top:162.91px;font-size:11.8px;line-height:16px;height:16px;letter-spacing:-0.350px;">Yellow</div>
<div class="t" style="left:1146.40px;top:162.91px;font-size:11.8px;line-height:16px;height:16px;letter-spacing:-0.132px;">yellow</div>
<div class="t" style="left:895.95px;top:191.91px;font-size:11.8px;line-height:16px;height:16px;letter-spacing:-0.614px;">31</div>
<div class="t" style="left:912.60px;top:191.91px;font-size:11.8px;line-height:16px;height:16px;letter-spacing:-0.614px;">Ecru</div>
<div class="t" style="left:1146.40px;top:191.91px;font-size:11.8px;line-height:16px;height:16px;letter-spacing:-0.396px;">ecru</div>
<div class="t" style="left:895.95px;top:220.91px;font-size:11.8px;line-height:16px;height:16px;letter-spacing:-0.614px;">32</div>
<div class="t" style="left:912.60px;top:220.91px;font-size:11.8px;line-height:16px;height:16px;letter-spacing:-0.614px;">Black</div>
<div class="t" style="left:1146.40px;top:220.91px;font-size:11.8px;line-height:16px;height:16px;letter-spacing:-0.360px;">black</div>
<div class="t" style="left:894.95px;top:249.91px;font-size:11.8px;line-height:16px;height:16px;letter-spacing:-0.614px;">33</div>
<div class="t" style="left:912.60px;top:249.91px;font-size:11.8px;line-height:16px;height:16px;letter-spacing:-0.289px;">Black / White</div>
<div class="t" style="left:1146.40px;top:249.91px;font-size:11.8px;line-height:16px;height:16px;letter-spacing:-0.035px;">black-white</div>
<div class="t" style="left:894.95px;top:278.91px;font-size:11.8px;line-height:16px;height:16px;letter-spacing:-0.614px;">34</div>
<div class="t" style="left:912.60px;top:278.91px;font-size:11.8px;line-height:16px;height:16px;letter-spacing:-0.228px;">Dark blue</div>
<div class="t" style="left:1146.40px;top:278.91px;font-size:11.8px;line-height:16px;height:16px;letter-spacing:-0.027px;">dark-blue</div>
<div class="t" style="left:894.95px;top:307.91px;font-size:11.8px;line-height:16px;height:16px;letter-spacing:-0.614px;">35</div>
<div class="t" style="left:912.60px;top:307.91px;font-size:11.8px;line-height:16px;height:16px;letter-spacing:-0.614px;">Beige</div>
<div class="t" style="left:1146.40px;top:307.91px;font-size:11.8px;line-height:16px;height:16px;letter-spacing:-0.276px;">beige</div>
<div class="t" style="left:894.95px;top:336.91px;font-size:11.8px;line-height:16px;height:16px;letter-spacing:-0.614px;">48</div>
<div class="t" style="left:912.60px;top:336.91px;font-size:11.8px;line-height:16px;height:16px;letter-spacing:-0.424px;">Dusty rose</div>
<div class="t" style="left:1146.40px;top:336.91px;font-size:11.8px;line-height:16px;height:16px;letter-spacing:-0.279px;">dusty-rose</div>
<div class="t" style="left:835.40px;top:424.98px;font-size:11.6px;line-height:16px;height:16px;font-weight:bold;color:#3b2f9e;letter-spacing:-0.240px;">Name *</div>
<div class="t" style="left:835.40px;top:454.98px;font-size:11.6px;line-height:16px;height:16px;font-weight:bold;letter-spacing:-0.603px;">Slug</div>
<div class="t" style="left:835.40px;top:497.98px;font-size:11.6px;line-height:16px;height:16px;font-weight:bold;letter-spacing:-0.530px;">Description</div>
<div class="t" style="left:835.40px;top:541.98px;font-size:11.6px;line-height:16px;height:16px;font-weight:bold;letter-spacing:-0.484px;">Parent</div>
<div class="t" style="left:970.80px;top:424.91px;font-size:11.8px;line-height:16px;height:16px;color:#fff;letter-spacing:-0.614px;-webkit-text-stroke:0.3px #fff;">Blue</div>
<div class="t" style="left:970.50px;top:454.91px;font-size:11.8px;line-height:16px;height:16px;letter-spacing:-0.148px;">blue</div>
<div class="t" style="left:970.20px;top:541.91px;font-size:11.8px;line-height:16px;height:16px;letter-spacing:-0.380px;">None</div>
</div>
<div id="frame"></div>
</body></html>
